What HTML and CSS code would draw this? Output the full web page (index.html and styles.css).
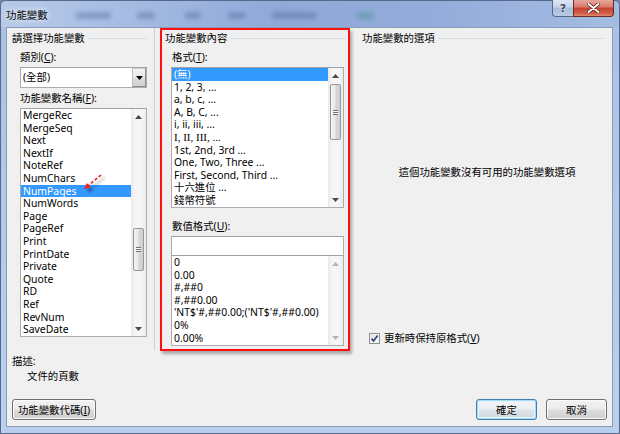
FILE: index.html
```html
<!DOCTYPE html>
<html lang="zh-Hant">
<head>
<meta charset="utf-8">
<title>功能變數</title>
<link rel="stylesheet" href="styles.css">
</head>
<body>
<div class="window">
  <div class="titlebar">
    <span class="title">功能變數</span>
    <div class="blurs">
      <span class="blob b1"></span><span class="blob b2"></span><span class="blob b3"></span><span class="blob b4"></span><span class="blob b5"></span><span class="blob b6"></span>
    </div>
    <div class="caps">
      <span class="cap cap-help">?</span>
      <span class="cap cap-close"><svg width="13" height="10" viewBox="0 0 13 10"><path d="M1.5 1 L11.5 9 M11.5 1 L1.5 9" stroke="#4a1a14" stroke-width="3.4" stroke-linecap="round"/><path d="M1.5 1 L11.5 9 M11.5 1 L1.5 9" stroke="#ffffff" stroke-width="2" stroke-linecap="round"/></svg></span>
    </div>
  </div>
  <div class="client">
    <div class="panes">
      <section class="col col-left">
        <div class="ghead">請選擇功能變數</div>
        <div class="label ind">類別(<u>C</u>):</div>
        <div class="combo">
          <span class="combo-text">(全部)</span>
          <span class="combo-btn"><svg width="7" height="4" viewBox="0 0 7 4"><polygon points="0,0 7,0 3.5,4" fill="#000"/></svg></span>
        </div>
        <div class="label ind lab-names">功能變數名稱(<u>F</u>):</div>
        <div class="list list-names">
          <div class="items">
            <div class="item">MergeRec</div>
            <div class="item">MergeSeq</div>
            <div class="item">Next</div>
            <div class="item">NextIf</div>
            <div class="item">NoteRef</div>
            <div class="item">NumChars</div>
            <div class="item sel">NumPages</div>
            <div class="item">NumWords</div>
            <div class="item">Page</div>
            <div class="item">PageRef</div>
            <div class="item">Print</div>
            <div class="item">PrintDate</div>
            <div class="item">Private</div>
            <div class="item">Quote</div>
            <div class="item">RD</div>
            <div class="item">Ref</div>
            <div class="item">RevNum</div>
            <div class="item">SaveDate</div>
          </div>
          <div class="sb">
            <div class="sb-arrow"><svg width="7" height="4" viewBox="0 0 7 4"><polygon points="0,4 3.5,0 7,4" class="tri"/></svg></div>
            <div class="sb-track"><div class="thumb thumb-names"><span class="grip"></span></div></div>
            <div class="sb-arrow"><svg width="7" height="4" viewBox="0 0 7 4"><polygon points="0,0 7,0 3.5,4" class="tri"/></svg></div>
          </div>
        </div>
        <div class="desc-label">描述:</div>
        <div class="desc">文件的頁數</div>
      </section>
      <div class="vsep"></div>
      <section class="col col-mid">
        <div class="ghead">功能變數內容</div>
        <div class="label mind">格式(<u>T</u>):</div>
        <div class="list list-format">
          <div class="items">
            <div class="item sel">(無)</div>
            <div class="item">1, 2, 3, ...</div>
            <div class="item">a, b, c, ...</div>
            <div class="item">A, B, C, ...</div>
            <div class="item">i, ii, iii, ...</div>
            <div class="item roman">I, II, III, ...</div>
            <div class="item">1st, 2nd, 3rd ...</div>
            <div class="item">One, Two, Three ...</div>
            <div class="item">First, Second, Third ...</div>
            <div class="item">十六進位 ...</div>
            <div class="item">錢幣符號</div>
          </div>
          <div class="sb">
            <div class="sb-arrow"><svg width="7" height="4" viewBox="0 0 7 4"><polygon points="0,4 3.5,0 7,4" class="tri"/></svg></div>
            <div class="sb-track"><div class="thumb thumb-format"><span class="grip"></span></div></div>
            <div class="sb-arrow"><svg width="7" height="4" viewBox="0 0 7 4"><polygon points="0,0 7,0 3.5,4" class="tri"/></svg></div>
          </div>
        </div>
        <div class="label mind lab-num">數值格式(<u>U</u>):</div>
        <div class="textbox"></div>
        <div class="list list-num">
          <div class="items">
            <div class="item">0</div>
            <div class="item">0.00</div>
            <div class="item">#,##0</div>
            <div class="item">#,##0.00</div>
            <div class="item">'NT$'#,##0.00;('NT$'#,##0.00)</div>
            <div class="item">0%</div>
            <div class="item">0.00%</div>
          </div>
          <div class="sb">
            <div class="sb-arrow"><svg width="7" height="4" viewBox="0 0 7 4"><polygon points="0,4 3.5,0 7,4" class="tri off"/></svg></div>
            <div class="sb-track"></div>
            <div class="sb-arrow"><svg width="7" height="4" viewBox="0 0 7 4"><polygon points="0,0 7,0 3.5,4" class="tri off"/></svg></div>
          </div>
        </div>
      </section>
      <section class="col col-right">
        <div class="ghead">功能變數的選項</div>
        <div class="msg">這個功能變數沒有可用的功能變數選項</div>
        <div class="check-row">
          <span class="checkbox"><svg width="9" height="9" viewBox="0 0 9 9"><path d="M1.5 4.6 L3.6 7 L7.6 1.6" fill="none" stroke="#2a3f7a" stroke-width="1.6"/></svg></span>
          <span class="check-label">更新時保持原格式(<u>V</u>)</span>
        </div>
      </section>
    </div>
    <div class="footer">
      <div class="btn btn-codes">功能變數代碼(<u>I</u>)</div>
      <div class="btn btn-ok">確定</div>
      <div class="btn btn-cancel">取消</div>
    </div>
  </div>
  <svg class="annot" width="30" height="30" viewBox="0 0 30 30">
    <defs>
      <filter id="sh" x="-50%" y="-50%" width="200%" height="200%">
        <feDropShadow dx="3" dy="3" stdDeviation="1.6" flood-color="#000" flood-opacity="0.45"/>
      </filter>
    </defs>
    <g filter="url(#sh)">
      <line x1="21" y1="7" x2="8.6" y2="17.2" stroke="#ff1a1a" stroke-width="1.6" stroke-dasharray="3 2"/>
      <polygon points="4,21 10.5,19.5 6.7,14.9" fill="#ff1a1a"/>
    </g>
  </svg>
</div>
</body>
</html>
```
FILE: styles.css
```css
* { box-sizing: border-box; }
html, body { margin: 0; padding: 0; }
body {
  width: 620px;
  height: 434px;
  overflow: hidden;
  font-family: "Noto Sans", "Noto Sans CJK TC", sans-serif;
  font-size: 10.4px;
  color: #000;
  background: #6d86ad;
}
u { text-decoration: underline; }

.window {
  position: relative;
  width: 620px;
  height: 434px;
  display: flex;
  flex-direction: column;
  border: 1px solid #56698a;
  border-radius: 6px 6px 0 0;
  background: linear-gradient(180deg, #a9c0e4 0%, #b2c8e8 40%, #bad0ec 100%);
}

/* title bar */
.titlebar {
  height: 26px;
  display: flex;
  align-items: flex-start;
  border-radius: 5px 5px 0 0;
  background: linear-gradient(90deg, #b7cae7 0%, #a7bde3 18%, #8fa9d8 45%, #93acda 70%, #a5bce2 100%);
}
.title {
  margin: 8px 0 0 5px;
  line-height: 13px;
  white-space: nowrap;
  text-shadow: 0 0 4px #e8f0fb, 0 0 7px #e8f0fb;
}
.blurs {
  display: flex;
  margin-top: 11px;
  margin-left: 28px;
}
.blob {
  height: 7px;
  border-radius: 3px;
  background: rgba(60, 85, 140, 0.33);
  filter: blur(2px);
}
.b1 { width: 35px; }
.b2 { width: 18px; margin-left: 26px; }
.b3 { width: 16px; margin-left: 30px; }
.b4 { width: 18px; margin-left: 27px; }
.b5 { width: 45px; margin-left: 26px; }
.b6 { width: 17px; margin-left: 40px; background: rgba(60, 140, 130, 0.4); }
.caps {
  margin-left: auto;
  margin-right: 5px;
  margin-top: -1px;
  display: flex;
}
.cap {
  height: 17px;
  display: flex;
  align-items: center;
  justify-content: center;
  border: 1px solid #56698a;
  border-top: none;
}
.cap-help {
  width: 21px;
  border-radius: 0 0 0 4px;
  border-right: none;
  background: linear-gradient(180deg, #dde6f3 0%, #c4d2e7 45%, #a9bcd9 50%, #b9cbe4 100%);
  color: #3a4a62;
  font-family: "DejaVu Sans", sans-serif;
  font-weight: bold;
  font-size: 11px;
  text-shadow: 0 0 2px #fff;
}
.cap-close {
  width: 41px;
  border-radius: 0 0 4px 0;
  border-color: #6b2a22;
  background: linear-gradient(180deg, #e8a89c 0%, #d9786a 45%, #c4412f 50%, #d2624c 85%, #e08c6e 100%);
}

/* client area */
.client {
  flex: 1;
  margin: 0 6px 6px 5px;
  background: #f0f0f0;
  border: 1px solid #8a9cb8;
  display: flex;
  flex-direction: column;
}
.panes {
  display: flex;
  align-items: flex-start;
  padding-left: 5px;
}
.col { display: flex; flex-direction: column; }
.col-left { width: 136px; }
.vsep {
  width: 1px;
  height: 322px;
  margin-left: 6px;
  background: #cfcfcf;
}
.col-mid {
  width: 190px;
  height: 323px;
  margin-left: 5px;
  border: 2px solid #ff1010;
  box-shadow: 2px 3px 3px rgba(0, 0, 0, 0.3);
}
.col-right {
  width: 246px;
  margin-left: 12px;
}

.ghead {
  display: flex;
  align-items: center;
  height: 13px;
  line-height: 13px;
  white-space: nowrap;
}
.ghead::after {
  content: "";
  flex: 1;
  height: 1px;
  margin-left: 3px;
  background: #d3dde7;
}
.col-left .ghead { margin: 4px 1px 0 0; }
.col-mid .ghead { margin: 2px 3px 0 3px; }
.col-right .ghead { margin: 4px 4px 0 0; }

.label {
  height: 13px;
  line-height: 13px;
  margin-top: 6px;
  white-space: nowrap;
}
.ind { margin-left: 8px; }
.mind { margin-left: 10px; }
.lab-names { margin-top: 4px; }
.lab-num { margin-top: 12px; }

/* combo */
.combo {
  margin: 3px 0 0 8px;
  width: 127px;
  height: 21px;
  border: 1px solid #abadb3;
  border-top-color: #a0a3aa;
  background: #fff;
  display: flex;
  align-items: stretch;
}
.combo-text {
  flex: 1;
  padding-left: 2px;
  line-height: 19px;
}
.combo-btn {
  width: 14px;
  display: flex;
  align-items: center;
  justify-content: center;
  border: 1px solid #8c8c8c;
  border-left-color: #bdbdbd;
  border-top-color: #cfcfcf;
  background: linear-gradient(180deg, #f3f3f3 0%, #e9e9e9 50%, #dcdcdc 51%, #d2d2d2 100%);
}

/* lists */
.list {
  display: flex;
  border: 1px solid #abadb3;
  border-top-color: #9ea1a8;
  background: #fff;
}
.items { flex: 1; overflow: hidden; }
.item {
  height: 12.6px;
  line-height: 12.6px;
  padding-left: 2px;
  white-space: nowrap;
}
.item.sel { background: #3399ff; color: #fff; }
.item.roman { font-family: "Liberation Serif", "Noto Sans", serif; font-size: 11px; }
.list-names { margin: 3px 0 0 8px; width: 127px; height: 229px; }
.list-format { margin: 3px 0 0 9px; width: 173px; height: 141px; }
.list-num { margin: 0 0 0 9px; width: 173px; height: 91px; }

.sb {
  width: 15px;
  display: flex;
  flex-direction: column;
  background: linear-gradient(90deg, #e9e9e9 0%, #f6f6f6 30%, #f6f6f6 70%, #ececec 100%);
}
.sb-arrow {
  height: 15px;
  display: flex;
  align-items: center;
  justify-content: center;
}
.tri { fill: #4a4a4a; }
.tri.off { fill: #b4b4b4; }
.sb-track { flex: 1; }
.thumb {
  margin: 0 2px;
  border: 1px solid #979797;
  border-radius: 2px;
  background: linear-gradient(90deg, #f4f4f4 0%, #e8e8e8 45%, #d8d8d8 55%, #cfcfcf 100%);
  display: flex;
  align-items: center;
  justify-content: center;
}
.thumb-names { margin-top: 104px; height: 43px; }
.thumb-format { margin-top: 1px; height: 56px; }
.grip {
  width: 5px;
  height: 5px;
  background: repeating-linear-gradient(180deg, #6f6f6f 0px, #6f6f6f 1px, #f8f8f8 1px, #f8f8f8 2px);
}

.textbox {
  margin: 3px 0 0 9px;
  width: 173px;
  height: 19px;
  border: 1px solid #abadb3;
  border-top-color: #9ea1a8;
  border-bottom: none;
  background: #fff;
}

.desc-label {
  margin-top: 18px;
  height: 13px;
  line-height: 13px;
}
.desc {
  margin: 2px 0 0 15px;
  height: 13px;
  line-height: 13px;
}

.msg {
  margin-top: 121px;
  padding-left: 4px;
  height: 13px;
  line-height: 13px;
  text-align: center;
  white-space: nowrap;
}
.check-row {
  margin: 153px 0 0 7px;
  height: 13px;
  display: flex;
  align-items: center;
}
.checkbox {
  width: 11px;
  height: 11px;
  border: 1px solid #8e8f8f;
  background: linear-gradient(135deg, #d9dce1 0%, #f1f2f4 60%, #fbfbfb 100%);
  box-shadow: inset 0 0 0 1px #f4f4f4;
  display: flex;
  align-items: center;
  justify-content: center;
}
.check-label {
  margin-left: 4px;
  line-height: 13px;
  white-space: nowrap;
}

/* footer buttons */
.footer {
  margin-top: auto;
  display: flex;
  align-items: center;
  padding: 0 5px 6px 5px;
}
.btn {
  height: 21px;
  display: flex;
  align-items: center;
  justify-content: center;
  border: 1px solid #707070;
  border-radius: 3px;
  background: linear-gradient(180deg, #f2f2f2 0%, #ebebeb 48%, #dddddd 52%, #cfcfcf 100%);
  box-shadow: inset 0 0 0 1px #fbfbfb;
  white-space: nowrap;
}
.btn-codes { width: 84px; }
.btn-ok {
  width: 61px;
  margin-left: auto;
  border-color: #3c7fb1;
  box-shadow: inset 0 0 0 1px #a8dbf5, inset 0 0 0 2px #e4f3fb;
  background: linear-gradient(180deg, #f2f6f8 0%, #eaeef1 48%, #dde4e8 52%, #d2dbe0 100%);
}
.btn-cancel { width: 61px; margin-left: 9px; }

/* annotation arrow over the names list */
.annot {
  position: absolute;
  left: 79px;
  top: 167px;
  overflow: visible;
}
```
